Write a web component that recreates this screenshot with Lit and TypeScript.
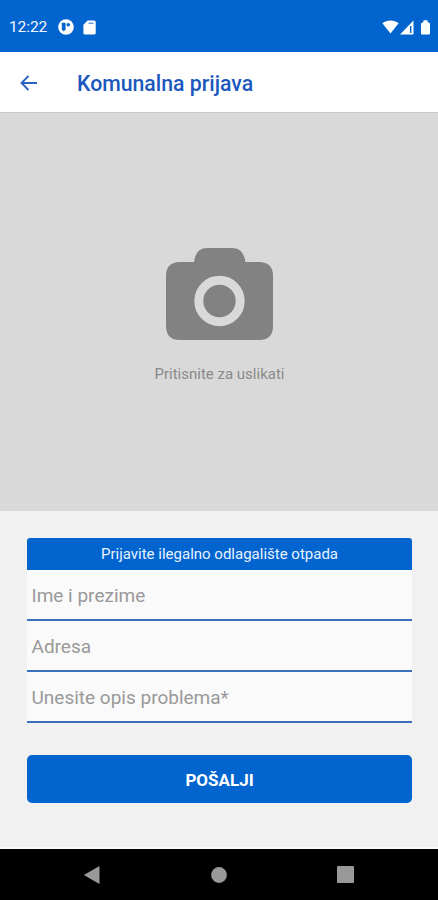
import { LitElement, html, css } from "lit";
import { customElement } from "lit/decorators.js";

@customElement("app-root")
export class AppRoot extends LitElement {
  static styles = css`
    :host {
      display: flex;
      flex-direction: column;
      box-sizing: border-box;
      width: 438px;
      height: 900px;
      overflow: hidden;
      background: #f1f1f1;
      font-family: Roboto, "Liberation Sans", sans-serif;
    }
    svg {
      display: block;
      flex: none;
    }
    .status {
      flex: none;
      box-sizing: border-box;
      height: 52px;
      padding: 2px 8px 0 9px;
      display: flex;
      align-items: center;
      background: #0265cf;
      color: #f4f8ff;
    }
    .time {
      width: 49px;
      font-size: 15.5px;
      line-height: 20px;
      letter-spacing: -0.1px;
      white-space: nowrap;
    }
    .grow {
      flex: 1;
    }
    .sd {
      margin-left: 9px;
    }
    .signal {
      margin-left: 1px;
    }
    .battery {
      margin-left: 7px;
    }
    .toolbar {
      flex: none;
      box-sizing: border-box;
      height: 61px;
      padding: 2px 20px 0;
      display: flex;
      align-items: center;
      background: #fff;
      border-bottom: 1px solid #c9c9c9;
    }
    .title {
      margin-left: 39px;
      padding-top: 1px;
      font-size: 21.25px;
      font-weight: 500;
      line-height: 26px;
      color: #1b58bd;
      white-space: nowrap;
    }
    .photo {
      flex: none;
      box-sizing: border-box;
      height: 398px;
      padding: 135px 0 0 1px;
      display: flex;
      flex-direction: column;
      align-items: center;
      background: #d9d9d9;
    }
    .hint {
      margin-top: 24px;
      font-size: 15px;
      line-height: 20px;
      color: #8a8a8a;
      white-space: nowrap;
    }
    .form {
      flex: 1;
      padding: 27px 26px 0 27px;
      border-bottom: 2px solid #fafafa;
    }
    .heading {
      height: 32px;
      border-radius: 3px 3px 0 0;
      background: #0265cf;
      color: #e9f2ff;
      font-size: 15px;
      line-height: 32px;
      text-align: center;
      white-space: nowrap;
    }
    .field {
      box-sizing: border-box;
      height: 51px;
      padding-left: 4.5px;
      background: #fafafa;
      border-bottom: 2px solid #3a6fbd;
      font-size: 19px;
      line-height: 51px;
      color: #999;
      white-space: nowrap;
    }
    .send {
      display: block;
      width: 100%;
      height: 48px;
      margin-top: 32px;
      padding: 2px 0 0;
      border: 0;
      border-radius: 5px;
      background: #0265cf;
      color: #fff;
      font: 700 17px/46px Roboto, "Liberation Sans", sans-serif;
      text-align: center;
    }
    .nav {
      flex: none;
      box-sizing: border-box;
      height: 51px;
      padding: 0 84px 0 83px;
      display: flex;
      align-items: center;
      justify-content: space-between;
      background: #000;
    }
  `;

  render() {
    return html`
      <div class="status">
        <span class="time">12:22</span>
        <svg width="16" height="16" viewBox="0 0 16 16">
          <circle cx="8" cy="8" r="7.8" fill="#fff" />
          <path d="M3.8 3.8h3.8v6.4l-1.8 2.4-2-2.4z" fill="#0265cf" />
          <circle cx="10.3" cy="5.8" r="1.8" fill="#0265cf" />
        </svg>
        <svg class="sd" width="13" height="15" viewBox="0 0 13 15">
          <path d="M4.6.5h6.6a1.5 1.5 0 0 1 1.5 1.5v11a1.5 1.5 0 0 1-1.5 1.5H1.9A1.5 1.5 0 0 1 .4 13V4.7z" fill="#fff" />
          <path d="M5.5 3.2h5" stroke="#0265cf" stroke-width="1.3" opacity=".7" />
        </svg>
        <span class="grow"></span>
        <svg width="17" height="14" viewBox="0 0 17 14">
          <path d="M.4 3.3C5 -.3 12 -.3 16.600 3.300L8.500 13.500z" fill="#fff" />
        </svg>
        <svg class="signal" width="14" height="15" viewBox="0 0 14 15">
          <path d="M13.5.5v14H0z" fill="#fff" />
          <path d="M10.700 6v7" stroke="#0265cf" stroke-width="1.400" />
        </svg>
        <svg class="battery" width="9" height="15" viewBox="0 0 9 15">
          <path d="M2.500 .3h4v1.400L9 3.400v10.100a1 1 0 0 1-1 1H1a1 1 0 0 1-1-1V3.400l2.500-1.700z" fill="#fff" />
        </svg>
      </div>

      <div class="toolbar">
        <svg width="18" height="16" viewBox="0 0 18 16">
          <path d="M17 8H1.500M8.500 1L1.500 8l7 7" fill="none" stroke="#2b62c0" stroke-width="1.800" />
        </svg>
        <span class="title">Komunalna prijava</span>
      </div>

      <div class="photo">
        <svg width="107" height="92" viewBox="0 0 107 92">
          <path
            d="M28 14C29.500 5 33 0 41 0H66C74 0 78 5 79.500 14H93Q107 14 107 28V78Q107 92 93 92H14Q0 92 0 78V28Q0 14 14 14z"
            fill="#828282"
          />
          <circle cx="53.500" cy="53" r="20.700" fill="none" stroke="#d9d9d9" stroke-width="9" />
        </svg>
        <span class="hint">Pritisnite za uslikati</span>
      </div>

      <div class="form">
        <div class="heading">Prijavite ilegalno odlagalište otpada</div>
        <div class="field">Ime i prezime</div>
        <div class="field">Adresa</div>
        <div class="field">Unesite opis problema*</div>
        <button class="send">POŠALJI</button>
      </div>

      <div class="nav">
        <svg width="17" height="20" viewBox="0 0 17 20">
          <path d="M16.500 1v18L.800 10z" fill="#999" />
        </svg>
        <svg width="16" height="16" viewBox="0 0 16 16">
          <circle cx="8" cy="8" r="7.900" fill="#999" />
        </svg>
        <svg width="17" height="17" viewBox="0 0 17 17">
          <rect width="17" height="17" rx="1" fill="#999" />
        </svg>
      </div>
    `;
  }
}
